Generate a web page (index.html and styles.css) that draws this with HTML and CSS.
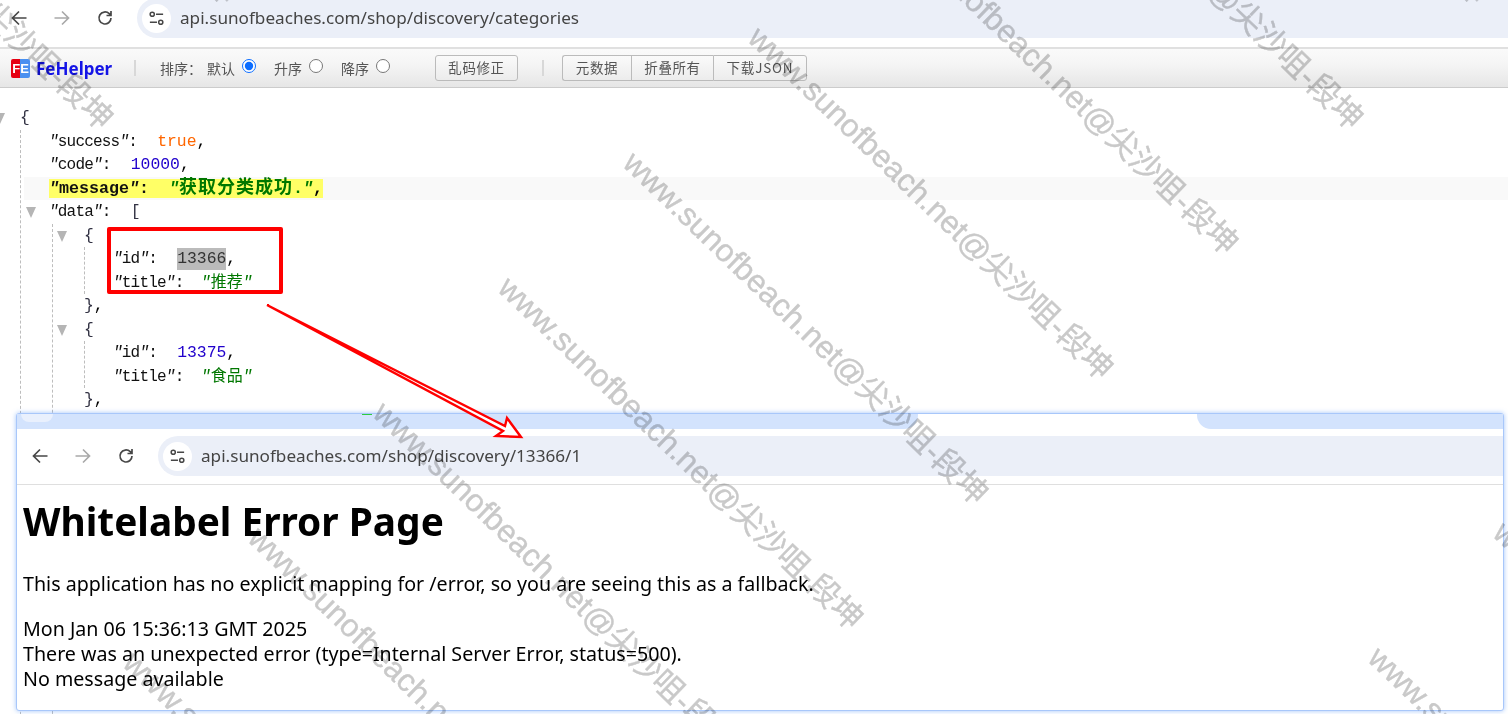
FILE: index.html
```html
<!DOCTYPE html>
<html lang="zh">
<head>
<meta charset="utf-8">
<title>FeHelper</title>
<link rel="stylesheet" href="styles.css">
</head>
<body>
<div class="page">
  <header class="nav nav-top">
    <span class="nav-btn"><svg class="ico" viewBox="0 0 18 18"><path d="M16.5 9H2.5M9 2.5 2.5 9 9 15.5"/></svg></span>
    <span class="nav-btn"><svg class="ico ico-off" viewBox="0 0 18 18"><path d="M1.5 9h14M9 2.5 15.5 9 9 15.5"/></svg></span>
    <span class="nav-btn"><svg class="ico" viewBox="0 0 18 18"><path d="M15 9a6 6 0 1 1-1.8-4.3L15 6.5M15 2v4.5h-4.5"/></svg></span>
    <div class="pill">
      <span class="tune"><svg class="ico-tune" viewBox="0 0 18 18"><circle cx="4.5" cy="4.5" r="2.2"/><path d="M8.5 4.5H16M2 13h7.5"/><circle cx="13.5" cy="13" r="2.2"/></svg></span>
      <span class="url">api.sunofbeaches.com/shop/discovery/categories</span>
    </div>
  </header>

  <div class="toolbar">
    <span class="logo"><span class="logo-fe">FE</span></span>
    <span class="brand">FeHelper</span>
    <span class="sep sep-a"></span>
    <span class="tool-label">排序：</span>
    <label class="sort sort-first">默认<input type="radio" name="sort" checked></label>
    <label class="sort">升序<input type="radio" name="sort"></label>
    <label class="sort">降序<input type="radio" name="sort"></label>
    <button class="btn btn-fix" type="button">乱码修正</button>
    <span class="sep sep-b"></span>
    <div class="btn-group">
      <button class="btn btn-meta" type="button">元数据</button>
      <button class="btn btn-fold" type="button">折叠所有</button>
      <button class="btn btn-dl" type="button">下载JSON</button>
    </div>
  </div>

  <main class="json">
    <div class="row"><span class="tri tri-root"></span><span class="brace">{</span></div>
    <div class="block block-root">
      <div class="row"><span class="key"><i>"</i>success<i>"</i>:  </span><span class="bool">true</span>,</div>
      <div class="row"><span class="key"><i>"</i>code<i>"</i>:  </span><span class="num">10000</span>,</div>
      <div class="row row-hover"><span class="mark"><span class="key key-b"><i>"</i>message<i>"</i>:  </span><span class="str str-b"><i>"</i><span class="cjk-b">获取分类成功</span>.<i>"</i></span>,</span></div>
      <div class="row"><span class="tri tri-data"></span><span class="key"><i>"</i>data<i>"</i>:  </span><span class="brace">[</span></div>
      <div class="block block-data">
        <div class="row"><span class="tri tri-item"></span><span class="brace">{</span></div>
        <div class="block block-item">
          <div class="row"><span class="key"><i>"</i>id<i>"</i>:  </span><span class="num num-sel">13366</span>,</div>
          <div class="row"><span class="key"><i>"</i>title<i>"</i>:  </span><span class="str"><i>"</i>推荐<i>"</i></span></div>
        </div>
        <div class="row"><span class="brace">}</span>,</div>
        <div class="row"><span class="tri tri-item"></span><span class="brace">{</span></div>
        <div class="block block-item">
          <div class="row"><span class="key"><i>"</i>id<i>"</i>:  </span><span class="num">13375</span>,</div>
          <div class="row"><span class="key"><i>"</i>title<i>"</i>:  </span><span class="str"><i>"</i>食品<i>"</i></span></div>
        </div>
        <div class="row"><span class="brace">}</span>,</div>
      </div>
    </div>
  </main>

  <section class="window">
    <div class="strip">
      <div class="strip-left"><span class="tab-ghost"></span><span class="tab-load"></span></div>
      <div class="strip-gap"></div>
      <div class="strip-right"></div>
    </div>
    <div class="nav nav-win">
      <span class="nav-btn"><svg class="ico" viewBox="0 0 18 18"><path d="M16.5 9H2.5M9 2.5 2.5 9 9 15.5"/></svg></span>
      <span class="nav-btn"><svg class="ico ico-off" viewBox="0 0 18 18"><path d="M1.5 9h14M9 2.5 15.5 9 9 15.5"/></svg></span>
      <span class="nav-btn"><svg class="ico" viewBox="0 0 18 18"><path d="M15 9a6 6 0 1 1-1.8-4.3L15 6.5M15 2v4.5h-4.5"/></svg></span>
      <div class="pill">
        <span class="tune"><svg class="ico-tune" viewBox="0 0 18 18"><circle cx="4.5" cy="4.5" r="2.2"/><path d="M8.5 4.5H16M2 13h7.5"/><circle cx="13.5" cy="13" r="2.2"/></svg></span>
        <span class="url">api.sunofbeaches.com/shop/discovery/13366/1</span>
      </div>
    </div>
    <div class="err">
      <h1 class="err-title">Whitelabel Error Page</h1>
      <p class="err-lead">This application has no explicit mapping for /error, so you are seeing this as a fallback.</p>
      <div class="err-line">Mon Jan 06 15:36:13 GMT 2025</div>
      <div class="err-line">There was an unexpected error (type=Internal Server Error, status=500).</div>
      <div class="err-line">No message available</div>
    </div>
  </section>

  <div class="redbox"></div>
  <svg class="arrow" viewBox="0 0 1508 714"><path d="M267 305 505 426 507 418 521 437 496 436 503 431Z"/></svg>

  <div class="wm wm1">www.sunofbeach.net@尖沙咀-段坤</div>
  <div class="wm wm2">www.sunofbeach.net@尖沙咀-段坤</div>
  <div class="wm wm3">www.sunofbeach.net@尖沙咀-段坤</div>
  <div class="wm wm4">www.sunofbeach.net@尖沙咀-段坤</div>
  <div class="wm wm5">www.sunofbeach.net@尖沙咀-段坤</div>
  <div class="wm wm6">www.sunofbeach.net@尖沙咀-段坤</div>
  <div class="wm wm7">www.sunofbeach.net@尖沙咀-段坤</div>
  <div class="wm wm8">www.sunofbeach.net@尖沙咀-段坤</div>
  <div class="wm wm9">www.sunofbeach.net@尖沙咀-段坤</div>
  <div class="wm wm10">www.sunofbeach.net@尖沙咀-段坤</div>
  <div class="wm wm11">www.sunofbeach.net@尖沙咀-段坤</div>
  <div class="wm wm12">www.sunofbeach.net@尖沙咀-段坤</div>
  <div class="wm wm13">www.sunofbeach.net@尖沙咀-段坤</div>
</div>
</body>
</html>
```

FILE: styles.css
```css
* { box-sizing: border-box; }
html, body { margin: 0; padding: 0; background: #fff; }
.page {
  position: relative;
  width: 1508px;
  height: 714px;
  overflow: hidden;
  font-family: "Noto Sans", "Noto Sans CJK SC", sans-serif;
  color: #000;
}

/* browser chrome */
.nav { display: flex; align-items: center; height: 40px; }
.nav-top { margin-top: -2px; }
.nav-win { margin-top: 7px; padding-left: 4px; }
.nav-btn { width: 38px; margin-right: 5px; display: flex; justify-content: center; }
.ico { width: 18px; height: 18px; fill: none; stroke: #474747; stroke-width: 1.7; }
.ico-off { stroke: #a9a9a9; }
.pill {
  flex: 1;
  height: 40px;
  margin-left: 8px;
  display: flex;
  align-items: center;
  padding-left: 5px;
  background: #ebeff8;
  border-radius: 20px 0 0 20px;
}
.tune {
  width: 29px;
  height: 29px;
  border-radius: 50%;
  background: #fff;
  display: flex;
  align-items: center;
  justify-content: center;
}
.ico-tune { width: 17px; height: 17px; fill: none; stroke: #474747; stroke-width: 1.6; }
.url { margin: 0 0 2px 9px; font-size: 17.15px; color: #444; white-space: nowrap; }

/* FeHelper toolbar */
.toolbar {
  display: flex;
  align-items: center;
  height: 41px;
  margin-top: 9px;
  padding-left: 11px;
  border-top: 2px solid #e0e0e0;
  border-bottom: 1px solid #ccc;
  background: linear-gradient(#fafafa, #f5f5f5 40%, #e6e6e6);
  font-size: 14px;
  color: #555;
}
.logo { width: 19px; height: 19px; background: linear-gradient(90deg, #e60012 50%, #4a90f0 50%); border-radius: 2px; display: flex; align-items: center; justify-content: center; }
.logo-fe { font: bold 13px/1 "Liberation Sans", sans-serif; color: #fff; }
.brand { margin-left: 6px; width: 75px; font: bold 17px/1 "Noto Sans", sans-serif; color: #1414e6; white-space: nowrap; }
.sep { width: 2px; height: 16px; background: #d8d8d8; }
.sep-a { margin-left: 23px; }
.tool-label { margin-left: 24px; width: 47px; font-size: 14px; white-space: nowrap; }
.sort { display: flex; align-items: center; width: 67px; font-size: 14px; white-space: nowrap; }
.sort input { width: 14px; height: 14px; margin: -5px 0 0 7px; accent-color: #0a6cff; }
.btn {
  height: 26px;
  padding: 0;
  border: 1px solid #bbb;
  border-radius: 3px;
  background: linear-gradient(#fafafa, #ececec);
  color: #555;
  font: 13.5px/1 "Noto Sans CJK SC", sans-serif;
  letter-spacing: .6px;
}
.btn-fix { width: 83px; margin-left: 27px; }
.sep-b { margin-left: 24px; }
.btn-group { display: flex; margin-left: 18px; }
.btn-group .btn { border-radius: 0; border-right: 0; }
.btn-group .btn:first-child { border-radius: 3px 0 0 3px; }
.btn-group .btn:last-child { border-radius: 0 3px 3px 0; border-right: 1px solid #bbb; }
.btn-meta { width: 69px; }
.btn-fold { width: 82px; }
.btn-dl { width: 94px; letter-spacing: .8px; }

/* JSON tree */
.json {
  padding: 18.3px 0 0 20px;
  font: 16.4px/23.5px "Liberation Mono", "Noto Sans CJK SC", monospace;
}
.row { position: relative; height: 23.5px; white-space: nowrap; }
.block { border-left: 1px dashed #bdbdbd; }
.block-root { padding-left: 28px; min-height: 640px; }
.block-data { margin-left: 3px; padding-left: 31px; min-height: 500px; }
.block-item { padding-left: 28px; }
.brace { color: #334; }
.key { margin-right: 2.5px; font-size: 16px; letter-spacing: -.8px; color: #111; white-space: pre; }
.key i, .str i { font-style: italic; }
.bool { color: #f60; }
.num { color: #2000cc; }
.num-sel { background: #bbb; color: #333; display: inline-block; height: 22px; line-height: 22px; }
.str { margin-left: -2.5px; color: #007700; font-size: 16px; }
.row-hover { margin-left: -25px; padding-left: 25px; background: #f9f9f9; }
.mark { background: #ffff66; font-weight: bold; }
.key-b { font-size: 16.67px; letter-spacing: 0; margin-right: 0; }
.str-b { margin-left: 0; font-size: 16.67px; }
.cjk-b { font-size: 18px; letter-spacing: 1px; }
.tri {
  position: absolute;
  width: 0;
  height: 0;
  border: 5px solid transparent;
  border-top: 11px solid #b5b5b5;
  border-bottom: 0;
  top: 7px;
}
.tri-root { left: -25px; }
.tri-data { left: -23px; }
.tri-item { left: -27px; }

/* overlaid browser window */
.window {
  position: absolute;
  left: 16px;
  top: 413px;
  width: 1488px;
  height: 298px;
  background: #fff;
  border: 1px solid #a8c7fa;
  border-radius: 3px;
  box-shadow: 0 0 5px rgba(90, 150, 245, .55);
}
.strip { display: flex; height: 15px; }
.strip-left { position: relative; width: 901px; background: #d3e3fd; border-bottom-right-radius: 14px; }
.strip-gap { width: 279px; }
.strip-right { flex: 1; background: #d3e3fd; border-bottom-left-radius: 14px; }
.tab-ghost { position: absolute; left: 4px; top: 0; width: 32px; height: 8px; background: #e9f0fd; border-radius: 0 0 8px 8px; }
.tab-load { position: absolute; left: 345px; top: 0; width: 10px; height: 1px; background: #2ecc40; }
.nav-win + .err { border-top: 1px solid #dfdfdf; margin-top: 8px; }
.err { padding: 0 6px; font-size: 19.65px; line-height: 25px; }
.err-title { margin: 11px 0 0; font-size: 38.8px; font-weight: 700; line-height: 50px; color: #000; }
.err-lead { margin: 25px 0 20px; }

/* annotations */
.redbox {
  position: absolute;
  left: 107px;
  top: 227px;
  width: 176px;
  height: 67px;
  border: 4px solid #f00;
  border-radius: 2px;
}
.arrow { position: absolute; left: 0; top: 0; width: 1508px; height: 714px; fill: #fff; stroke: #f00; stroke-width: 2.4; }

/* watermark */
.wm {
  position: absolute;
  height: 40px;
  font: 31.6px/40px "Liberation Sans", "Noto Sans CJK SC", sans-serif;
  color: #c9c9c9;
  -webkit-text-stroke: .4px #c9c9c9;
  mix-blend-mode: multiply;
  white-space: nowrap;
  transform-origin: 0 20px;
  transform: translate(4px, -18px) rotate(44deg);
}
.wm1 { left: -250px; top: -220px; }
.wm2 { left: -125px; top: -345px; }
.wm3 { left: 125px; top: 655px; }
.wm4 { left: 250px; top: 530px; }
.wm5 { left: 375px; top: 405px; }
.wm6 { left: 500px; top: 280px; }
.wm7 { left: 625px; top: 155px; }
.wm8 { left: 750px; top: 30px; }
.wm9 { left: 875px; top: -95px; }
.wm10 { left: 1000px; top: -220px; }
.wm11 { left: 1125px; top: -345px; }
.wm12 { left: 1370px; top: 650px; }
.wm13 { left: 1495px; top: 525px; }
```
